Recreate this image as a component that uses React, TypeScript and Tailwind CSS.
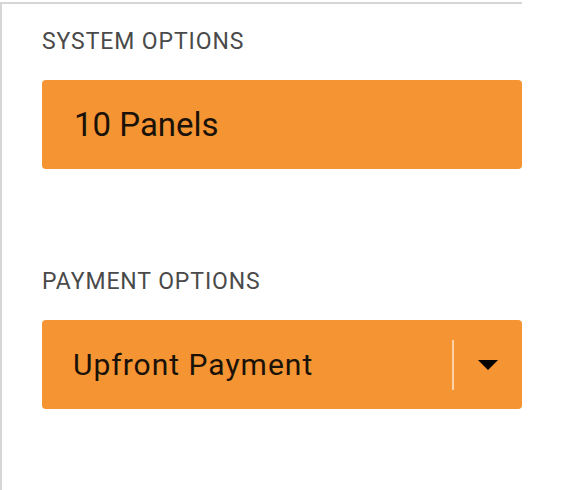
import React from "react";

export default function App() {
  return (
    <div className="w-[566px] h-[490px] bg-white overflow-hidden" style={{ fontFamily: "Roboto, 'Liberation Sans', sans-serif" }}>
      <div className="mt-[2px] w-[522px] h-[488px] border-t-2 border-l-2 border-[#d6d6d6] pl-[40px] pt-[25px]">
        <div className="text-[23px] leading-[26px] text-[#4a4a4a] tracking-[0.9px]">SYSTEM OPTIONS</div>
        <div className="mt-[25px] h-[89px] rounded-[4px] bg-[#f59433] flex items-center pl-[32px]">
          <span className="text-[33px] leading-none text-[#1a1208]">10 Panels</span>
        </div>
        <div className="mt-[100px] text-[23px] leading-[26px] text-[#4a4a4a] tracking-[0.9px]">PAYMENT OPTIONS</div>
        <div className="mt-[25px] h-[89px] rounded-[4px] bg-[#f59433] flex items-center pl-[31px]">
          <span className="flex-1 text-[30px] leading-none text-[#1a1208] tracking-[1px]">Upfront Payment</span>
          <div className="w-[2px] h-[50px] bg-[#fcd2a6]" />
          <div className="w-[68px] flex justify-center">
            <svg width="20" height="10" viewBox="0 0 20 10"><path d="M0 0 L20 0 L10 10 Z" fill="#000" /></svg>
          </div>
        </div>
      </div>
    </div>
  );
}
